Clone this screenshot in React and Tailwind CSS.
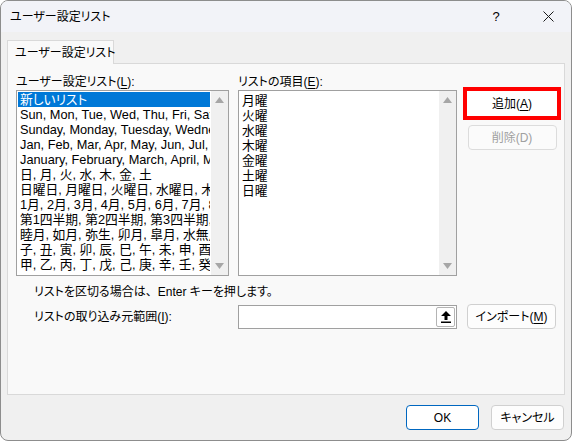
import React from "react";

const leftItems = [
    "新しいリスト",
    "Sun, Mon, Tue, Wed, Thu, Fri, Sat",
    "Sunday, Monday, Tuesday, Wednesday, Thursday, Friday, Saturday",
    "Jan, Feb, Mar, Apr, May, Jun, Jul, Aug, Sep, Oct, Nov, Dec",
    "January, February, March, April, May, June, July",
    "日, 月, 火, 水, 木, 金, 土",
    "日曜日, 月曜日, 火曜日, 水曜日, 木曜日, 金曜日, 土曜日",
    "1月, 2月, 3月, 4月, 5月, 6月, 7月, 8月, 9月",
    "第1四半期, 第2四半期, 第3四半期, 第4四半期",
    "睦月, 如月, 弥生, 卯月, 皐月, 水無月, 文月",
    "子, 丑, 寅, 卯, 辰, 巳, 午, 未, 申, 酉, 戌, 亥",
    "甲, 乙, 丙, 丁, 戊, 己, 庚, 辛, 壬, 癸",
];

const rightItems = ["月曜", "火曜", "水曜", "木曜", "金曜", "土曜", "日曜"];

function Scrollbar() {
    return (
        <div className="w-[17px] bg-[#f0f0f0] flex flex-col justify-between items-center py-[6px] shrink-0">
            <svg width="9" height="6" viewBox="0 0 9 6">
                <path d="M4.5 0 L9 6 L0 6 Z" fill="#a6a6a6" />
            </svg>
            <svg width="9" height="6" viewBox="0 0 9 6">
                <path d="M0 0 L9 0 L4.5 6 Z" fill="#a6a6a6" />
            </svg>
        </div>
    );
}

function Key({ k }) {
    return (
        <>
            (<span className="underline underline-offset-2">{k}</span>)
        </>
    );
}

export default function App() {
    return (
        <div className="w-[572px] h-[441px] flex flex-col bg-[#f0f0f0] border border-[#8d8d8d] rounded-lg overflow-hidden text-[12px] text-black font-['Liberation_Sans','Noto_Sans_CJK_JP',sans-serif] [font-feature-settings:'palt']">
            {/* Title bar */}
            <div className="h-[31px] shrink-0 bg-[#f2f3f8] flex items-center pl-[9px]">
                <span className="flex-1">ユーザー設定リスト</span>
                <span className="w-[20px] text-center text-[13px] mr-[37px]">?</span>
                <svg width="11" height="11" viewBox="0 0 11 11" className="mr-[17px]">
                    <path d="M0.5 0.5 L10.5 10.5 M10.5 0.5 L0.5 10.5" stroke="#1a1a1a" strokeWidth="1" />
                </svg>
            </div>

            {/* Tab strip */}
            <div className="pt-[8px] px-[6px]">
                <div className="w-[107px] h-[24px] -mb-px relative z-10 bg-[#f9f9f9] border border-b-0 border-[#d9d9d9] flex items-center pl-[7px] whitespace-nowrap">
                    ユーザー設定リスト
                </div>
                <div className="h-[332px] bg-[#f9f9f9] border border-[#d9d9d9] pl-[8px] pt-[10px]">
                    <div className="flex">
                        {/* Custom lists */}
                        <div className="w-[213px] flex flex-col">
                            <div className="h-[16px] leading-[16px]">
                                ユーザー設定リスト<Key k="L" />:
                            </div>
                            <div className="h-[186px] border border-[#a0a0a0] bg-white flex text-[12.75px]">
                                <div className="flex-1 overflow-hidden p-px">
                                    {leftItems.map((item, i) => (
                                        <div
                                            key={i}
                                            className={`h-[15px] leading-[15px] pl-[2px] whitespace-nowrap overflow-hidden ${
                                                i === 0 ? "bg-[#0078d7] text-white" : ""
                                            }`}
                                        >
                                            {item}
                                        </div>
                                    ))}
                                </div>
                                <Scrollbar />
                            </div>
                        </div>

                        {/* Entries */}
                        <div className="w-[219px] ml-[9px] flex flex-col">
                            <div className="h-[16px] leading-[16px]">
                                リストの項目<Key k="E" />:
                            </div>
                            <div className="h-[186px] border border-[#a0a0a0] bg-white flex text-[12.75px]">
                                <div className="flex-1 pl-[3px] pt-[2px]">
                                    {rightItems.map((item) => (
                                        <div key={item} className="h-[15px] leading-[15px]">
                                            {item}
                                        </div>
                                    ))}
                                </div>
                                <Scrollbar />
                            </div>
                        </div>

                        {/* Buttons */}
                        <div className="ml-[6px] pt-[13px] flex flex-col items-center">
                            <div className="w-[98px] h-[33px] border-4 border-[#ff0000] bg-white flex items-center justify-center">
                                追加<Key k="A" />
                            </div>
                            <div className="mt-[5px] w-[89px] h-[25px] rounded-[4px] border border-[#dcdcdc] bg-[#fbfbfb] text-[#a0a0a0] flex items-center justify-center">
                                削除(D)
                            </div>
                        </div>
                    </div>

                    {/* Hint and import range */}
                    <div className="pl-[18px] mt-[8px] h-[16px] leading-[16px]">
                        リストを区切る場合は<span className="[font-feature-settings:normal]">、</span>Enter キーを押します。
                    </div>
                    <div className="flex items-center mt-[4px]">
                        <div className="w-[222px] pl-[18px]">
                            リストの取り込み元範囲<Key k="I" />:
                        </div>
                        <div className="w-[219px] h-[24px] border border-[#a0a0a0] bg-white flex justify-end items-center pr-px">
                            <div className="w-[19px] h-[20px] border border-[#b4b4b4] rounded-[2px] bg-white flex items-center justify-center">
                                <svg width="10" height="12" viewBox="0 0 10 12">
                                    <path d="M5 0 L10 5 L6.5 5 L6.5 9 L3.5 9 L3.5 5 L0 5 Z" fill="#000" />
                                    <rect x="0" y="10.5" width="10" height="1.5" fill="#000" />
                                </svg>
                            </div>
                        </div>
                        <div className="ml-[10px] w-[89px] h-[25px] rounded-[4px] border border-[#d0d0d0] bg-[#fdfdfd] flex items-center justify-center">
                            インポート<Key k="M" />
                        </div>
                    </div>
                </div>
            </div>

            {/* Dialog buttons */}
            <div className="flex justify-end gap-[12px] pr-[7px] pt-[10px]">
                <div className="w-[73px] h-[25px] rounded-[4px] border border-[#0067c0] bg-white flex items-center justify-center">
                    OK
                </div>
                <div className="w-[73px] h-[25px] rounded-[4px] border border-[#d0d0d0] bg-[#fdfdfd] flex items-center justify-center">
                    キャンセル
                </div>
            </div>
        </div>
    );
}
